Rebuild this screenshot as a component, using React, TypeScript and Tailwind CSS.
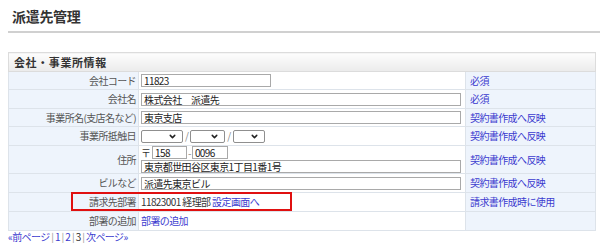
import React from 'react'
import { ChevronDown } from 'lucide-react'

const jp = { fontFamily: '"Noto Sans CJK JP", "Noto Sans", sans-serif' }

const TextBox: React.FC<{ value: string; className?: string }> = ({ value, className = '' }) => (
  <div className={`h-[13px] border border-[#a9a9a9] bg-white px-[2px] leading-[11px] text-[#222] ${className}`}>
    {value}
  </div>
)

const Select: React.FC<{ className?: string }> = ({ className = '' }) => (
  <div className={`h-[13px] border border-[#8f8f8f] rounded-[2px] bg-white flex items-center justify-end pr-[5px] ${className}`}>
    <ChevronDown className="w-[9px] h-[9px] text-[#222]" strokeWidth={4} />
  </div>
)

type Row = { label: string; note?: string; height: string; content: React.ReactNode }

const rows: Row[] = [
  { label: '会社コード', note: '必須', height: 'h-[18px]', content: <TextBox value="11823" className="w-[130px]" /> },
  { label: '会社名', note: '必須', height: 'h-[19px]', content: <TextBox value="株式会社　派遣先" className="w-[320px]" /> },
  { label: '事業所名(支店名など)', note: '契約書作成へ反映', height: 'h-[18px]', content: <TextBox value="東京支店" className="w-[320px]" /> },
  {
    label: '事業所抵触日',
    note: '契約書作成へ反映',
    height: 'h-[19px]',
    content: (
      <div className="flex items-center text-[#888]">
        <Select className="w-[42px]" />
        <span className="px-[2px]">/</span>
        <Select className="w-[35px]" />
        <span className="px-[2px]">/</span>
        <Select className="w-[32px]" />
      </div>
    ),
  },
  {
    label: '住所',
    note: '契約書作成へ反映',
    height: 'h-[27px]',
    content: (
      <div className="flex flex-col gap-[1px]">
        <div className="flex items-center">
          <span className="w-[11px] text-[#333]">〒</span>
          <TextBox value="158" className="w-[35px]" />
          <span className="px-[1px] text-[#888]">-</span>
          <TextBox value="0096" className="w-[36px]" />
        </div>
        <TextBox value="東京都世田谷区東京1丁目1番1号" className="w-[320px]" />
      </div>
    ),
  },
  { label: 'ビルなど', note: '契約書作成へ反映', height: 'h-[19px]', content: <TextBox value="派遣先東京ビル" className="w-[320px]" /> },
  {
    label: '請求先部署',
    note: '請求書作成時に使用',
    height: 'h-[19px]',
    content: (
      <span className="text-[#333]">
        11823001 経理部 <span className="text-[#3b3bcf]">設定画面へ</span>
      </span>
    ),
  },
  { label: '部署の追加', height: 'h-[19px]', content: <span className="text-[#3b3bcf]">部署の追加</span> },
]

export default function App() {
  return (
    <div className="w-[600px] h-[243px] bg-white overflow-hidden text-[10px] tracking-[-0.6px]" style={jp}>
      <div className="ml-2 h-[33px] border-b-2 border-[#d0d0d0] pl-1 pt-[6px]">
        <h1 className="text-[14px] font-semibold tracking-[-0.3px] text-[#333] leading-[20px]">派遣先管理</h1>
      </div>

      <div className="relative ml-2 mr-1 mt-[19px]">
        <table className="w-full border-collapse table-fixed">
          <colgroup>
            <col className="w-[130px]" />
            <col className="w-[327px]" />
            <col />
          </colgroup>
          <thead>
            <tr className="h-[19px]">
              <th
                colSpan={3}
                className="p-0 leading-[12px] border border-[#dcdcdc] bg-gradient-to-b from-[#fdfdfd] to-[#ebebeb] text-left pl-[5px] font-semibold text-[11px] tracking-[0.6px] text-[#333]"
              >
                会社・事業所情報
              </th>
            </tr>
          </thead>
          <tbody>
            {rows.map((r) => (
              <tr key={r.label} className={r.height}>
                <td className="p-0 leading-[12px] border border-[#dde3ea] bg-[#eef4fc] text-right pr-[2px] text-[#555] whitespace-nowrap">
                  {r.label}
                </td>
                <td className="p-0 leading-[12px] border border-[#dde3ea] bg-white pl-[2px] whitespace-nowrap">{r.content}</td>
                <td className="p-0 leading-[12px] border border-[#dde3ea] bg-[#eef4fc] pl-[4px] text-[#3b3bcf] whitespace-nowrap">
                  {r.note}
                </td>
              </tr>
            ))}
          </tbody>
        </table>
        <div className="absolute left-[63px] top-[140px] w-[221px] h-[19px] border-2 border-[#e01010] pointer-events-none" />
      </div>

      <div className="ml-2 leading-[12px] text-[#999]">
        <span className="text-[#3b3bcf]">«前ページ</span> | <span className="text-[#3b3bcf]">1</span> |{' '}
        <span className="text-[#3b3bcf]">2</span> | <span className="text-[#333]">3</span> |{' '}
        <span className="text-[#3b3bcf]">次ページ»</span>
      </div>
    </div>
  )
}
